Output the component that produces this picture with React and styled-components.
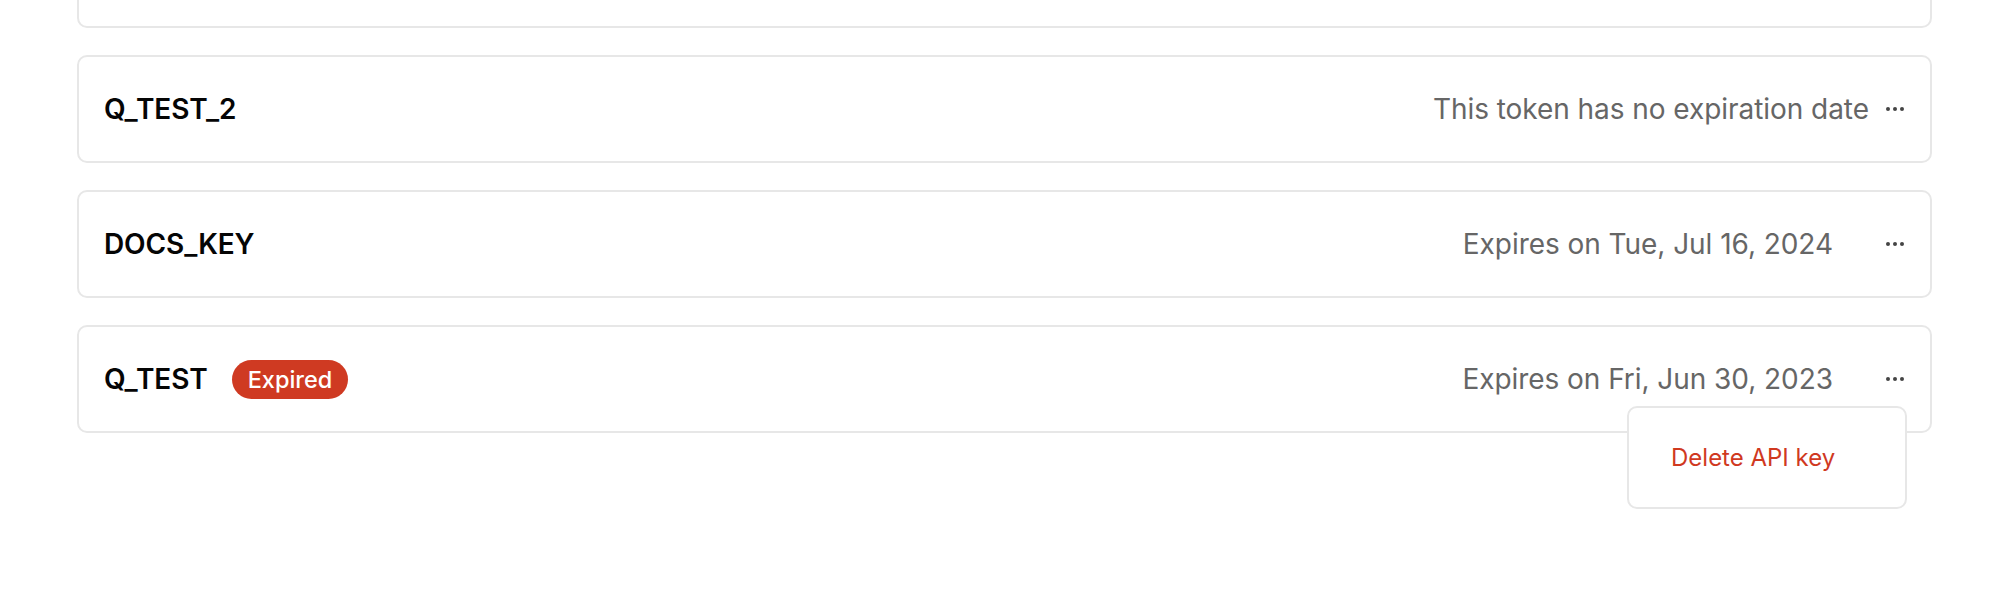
import React from 'react';
import styled, { createGlobalStyle } from 'styled-components';

const GlobalStyle = createGlobalStyle`
  html, body {
    margin: 0;
    padding: 0;
    background: #ffffff;
  }

  body {
    font-family: Inter, "Noto Sans", "Liberation Sans", sans-serif;
    -webkit-font-smoothing: antialiased;
  }
`;

const Page = styled.div`
  height: 608px;
  overflow: hidden;
  padding: 0 76px 0 77px;
  box-sizing: border-box;
`;

// the list is scrolled: the first card sits mostly above the fold
const KeyList = styled.div`
  display: flex;
  flex-direction: column;
  gap: 27px;
  margin-top: -80px;
`;

const Card = styled.div`
  height: 108px;
  box-sizing: border-box;
  display: flex;
  align-items: center;
  justify-content: space-between;
  padding: 0 26px 0 25px;
  background: #ffffff;
  border: 2px solid #e7e7e7;
  border-radius: 10px;
`;

const Left = styled.div`
  display: flex;
  align-items: center;
  gap: 24px;
`;

const Name = styled.span`
  font-size: 28px;
  font-weight: 600;
  color: #050505;
  letter-spacing: -0.1px;
`;

const Badge = styled.span`
  display: inline-flex;
  align-items: center;
  height: 39px;
  padding: 0 16px;
  border-radius: 20px;
  background: #cf3a22;
  color: #ffffff;
  font-size: 23.5px;
  font-weight: 500;
`;

const Right = styled.div`
  display: flex;
  align-items: center;
  gap: 17px;
`;

const Expiry = styled.span`
  font-size: 28px;
  color: #666666;
  letter-spacing: -0.05px;
  padding-right: ${p => (p.$dated ? '36px' : '0')};
`;

const MenuWrap = styled.div`
  position: relative;
  display: flex;
  align-items: center;
  height: 16px;
`;

const DotsButton = styled.button`
  display: flex;
  align-items: center;
  padding: 0;
  border: none;
  background: none;
  cursor: pointer;
`;

const Menu = styled.div`
  position: absolute;
  top: calc(100% + 19px);
  right: -3px;
  width: 280px;
  height: 103px;
  box-sizing: border-box;
  display: flex;
  align-items: center;
  padding-left: 42px;
  background: #ffffff;
  border: 2px solid #e7e7e7;
  border-radius: 10px;
  z-index: 2;
`;

const MenuItem = styled.span`
  font-size: 24px;
  color: #d0391f;
`;

const Dots = () => (
  <svg width="18" height="4" viewBox="0 0 18 4">
    <circle cx="2" cy="2" r="2" fill="#444" />
    <circle cx="9" cy="2" r="2" fill="#444" />
    <circle cx="16" cy="2" r="2" fill="#444" />
  </svg>
);

const keys = [
  { name: 'Q_TEST_2', expiry: 'This token has no expiration date' },
  { name: 'DOCS_KEY', expiry: 'Expires on Tue, Jul 16, 2024', dated: true },
  { name: 'Q_TEST', expiry: 'Expires on Fri, Jun 30, 2023', dated: true, expired: true, open: true }
];

const App = () => (
  <Page>
    <GlobalStyle />
    <KeyList>
      {/* card scrolled out of view above */}
      <Card />
      {keys.map(key => (
        <Card key={key.name}>
          <Left>
            <Name>{key.name}</Name>
            {key.expired && <Badge>Expired</Badge>}
          </Left>
          <Right>
            <Expiry $dated={key.dated}>{key.expiry}</Expiry>
            <MenuWrap>
              <DotsButton aria-label="More actions">
                <Dots />
              </DotsButton>
              {key.open && (
                <Menu>
                  <MenuItem>Delete API key</MenuItem>
                </Menu>
              )}
            </MenuWrap>
          </Right>
        </Card>
      ))}
    </KeyList>
  </Page>
);

export default App;
